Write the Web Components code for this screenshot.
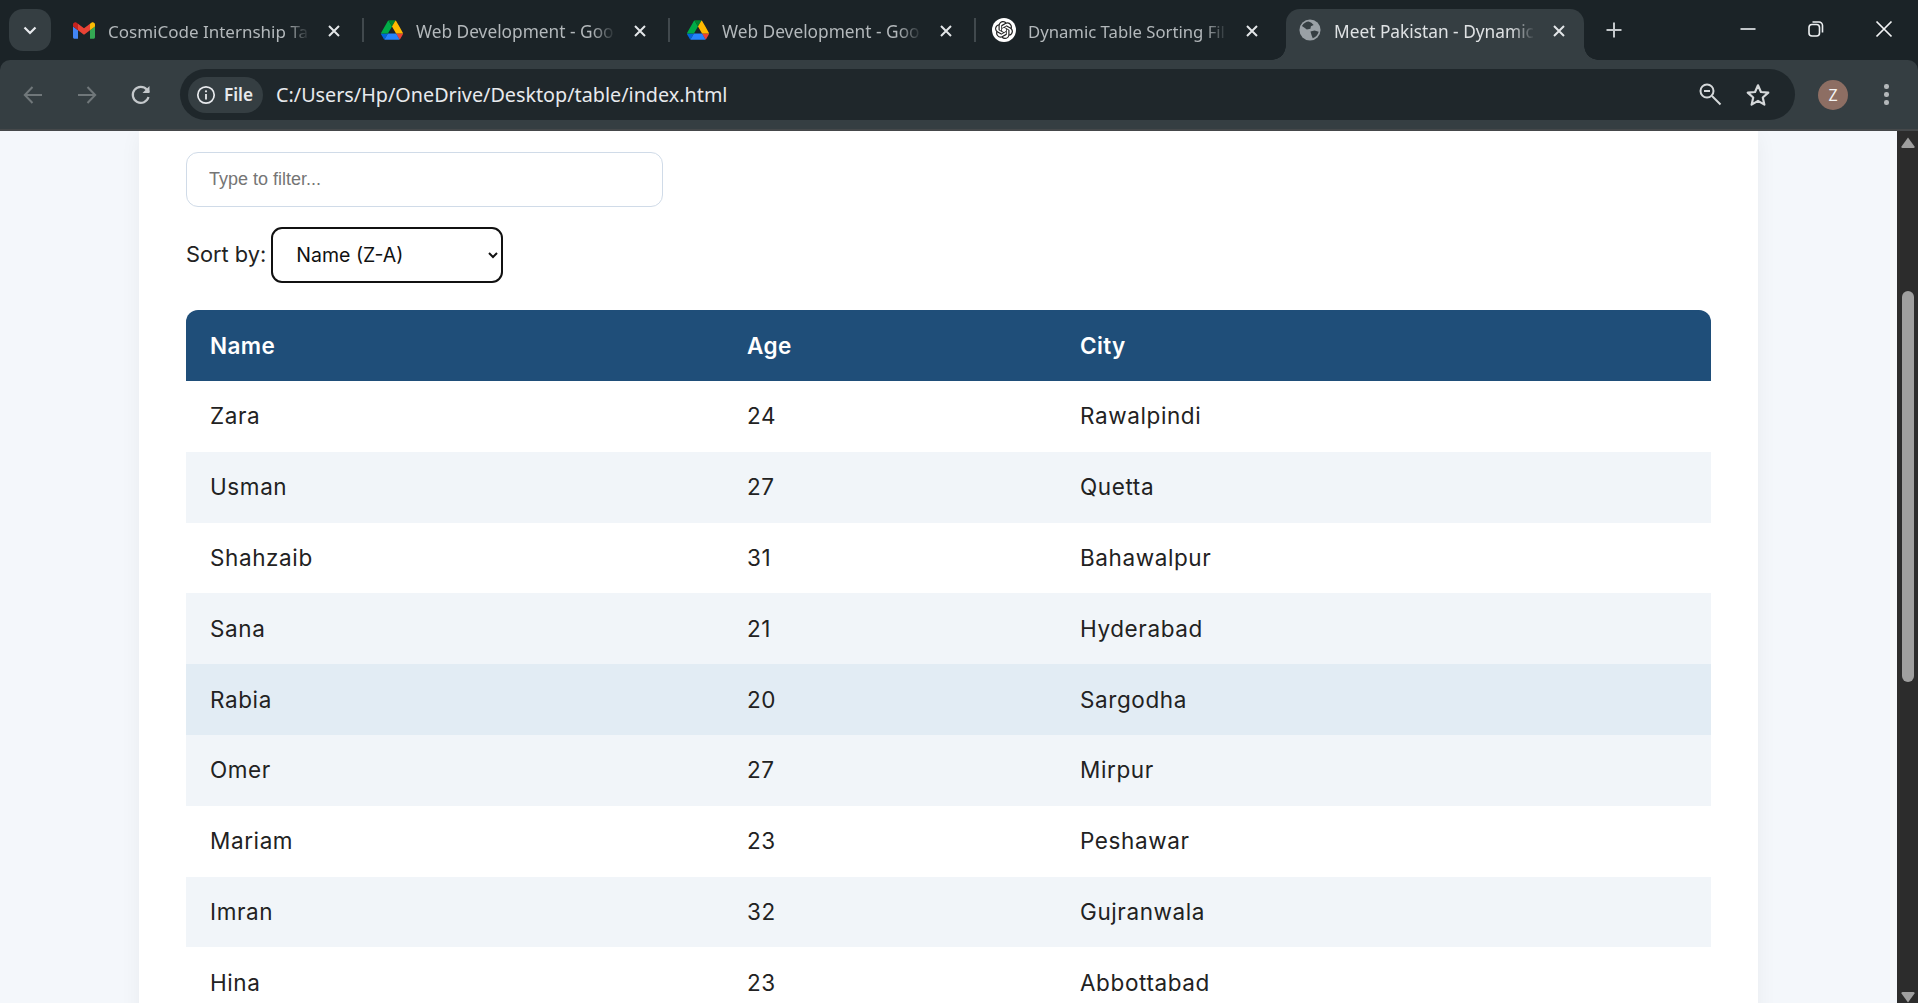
<!DOCTYPE html>
<html>
<head>
<meta charset="utf-8">
<title>Meet Pakistan - Dynamic Table</title>
<style>
    html, body { margin: 0; height: 100%; overflow: hidden; background: #1b2327; }
    body { display: flex; flex-direction: column; font-family: "Inter", "Liberation Sans", sans-serif; }
</style>
</head>
<body>
<browser-tabs>
    <browser-tab title-text="CosmiCode Internship Ta" icon="gmail" style="--tab-w:304px;--pad:12px;--title-size:17px"></browser-tab>
    <browser-tab title-text="Web Development - Goo" icon="drive" style="--tab-w:306px"></browser-tab>
    <browser-tab title-text="Web Development - Goo" icon="drive" style="--tab-w:306px"></browser-tab>
    <browser-tab title-text="Dynamic Table Sorting Fil" icon="chatgpt" style="--tab-w:306px;--title-size:16.7px"></browser-tab>
    <browser-tab title-text="Meet Pakistan - Dynamic" icon="globe" active style="--tab-w:298px;--pad:12px"></browser-tab>
</browser-tabs>
<browser-toolbar url="C:/Users/Hp/OneDrive/Desktop/table/index.html"></browser-toolbar>
<page-view>
    <table-card>
        <filter-controls></filter-controls>
        <data-table>
            <data-row name="Zara" age="24" city="Rawalpindi"></data-row>
            <data-row name="Usman" age="27" city="Quetta" striped></data-row>
            <data-row name="Shahzaib" age="31" city="Bahawalpur"></data-row>
            <data-row name="Sana" age="21" city="Hyderabad" striped></data-row>
            <data-row name="Rabia" age="20" city="Sargodha" hovered></data-row>
            <data-row name="Omer" age="27" city="Mirpur" striped></data-row>
            <data-row name="Mariam" age="23" city="Peshawar"></data-row>
            <data-row name="Imran" age="32" city="Gujranwala" striped></data-row>
            <data-row name="Hina" age="23" city="Abbottabad"></data-row>
        </data-table>
    </table-card>
</page-view>

<script>
const ICONS = {
    gmail: `<svg width="22" height="17" viewBox="52 42 88 66"><path fill="#4285f4" d="M58 108h14V74L52 59v43c0 3.32 2.69 6 6 6"/><path fill="#34a853" d="M120 108h14c3.32 0 6-2.69 6-6V59l-20 15"/><path fill="#fbbc04" d="M120 48v26l20-15v-8c0-7.42-8.47-11.65-14.4-7.2"/><path fill="#ea4335" d="M72 74V48l24 18 24-18v26L96 92"/><path fill="#c5221f" d="M52 51v8l20 15V48l-5.6-4.2c-5.94-4.45-14.4-.22-14.4 7.2"/></svg>`,
    drive: `<svg width="22" height="20" viewBox="0 0 87.3 78"><path d="m6.6 66.85 3.85 6.65c.8 1.4 1.95 2.5 3.3 3.3l13.75-23.8h-27.5c0 1.55.4 3.1 1.2 4.5z" fill="#0066da"/><path d="m43.65 25-13.75-23.8c-1.35.8-2.5 1.9-3.3 3.3l-25.4 44a9.06 9.06 0 0 0 -1.2 4.5h27.5z" fill="#00ac47"/><path d="m73.55 76.8c1.35-.8 2.5-1.9 3.3-3.3l1.6-2.75 7.65-13.25c.8-1.4 1.2-2.95 1.2-4.5h-27.502l5.852 11.5z" fill="#ea4335"/><path d="m43.65 25 13.75-23.8c-1.35-.8-2.9-1.2-4.5-1.2h-18.5c-1.6 0-3.15.45-4.5 1.2z" fill="#00832d"/><path d="m59.8 53h-32.3l-13.75 23.8c1.35.8 2.9 1.2 4.5 1.2h50.8c1.6 0 3.15-.45 4.5-1.2z" fill="#2684fc"/><path d="m73.4 26.5-12.7-22c-.8-1.4-1.95-2.5-3.3-3.3l-13.75 23.8 16.15 28h27.45c0-1.55-.4-3.1-1.2-4.5z" fill="#ffba00"/></svg>`,
    chatgpt: `<svg width="24" height="24" viewBox="-4 -4 32 32"><circle cx="12" cy="12" r="16" fill="#fff"/><path fill="#222" d="M22.2819 9.8211a5.9847 5.9847 0 0 0-.5157-4.9108 6.0462 6.0462 0 0 0-6.5098-2.9A6.0651 6.0651 0 0 0 4.9807 4.1818a5.9847 5.9847 0 0 0-3.9977 2.9 6.0462 6.0462 0 0 0 .7427 7.0966 5.98 5.98 0 0 0 .511 4.9107 6.051 6.051 0 0 0 6.5146 2.9001A5.9847 5.9847 0 0 0 13.2599 24a6.0557 6.0557 0 0 0 5.7718-4.2058 5.9894 5.9894 0 0 0 3.9977-2.9001 6.0557 6.0557 0 0 0-.7475-7.0729zm-9.022 12.6081a4.4755 4.4755 0 0 1-2.8764-1.0408l.1419-.0804 4.7783-2.7582a.7948.7948 0 0 0 .3927-.6813v-6.7369l2.02 1.1686a.071.071 0 0 1 .038.052v5.5826a4.504 4.504 0 0 1-4.4945 4.4944zm-9.6607-4.1254a4.4708 4.4708 0 0 1-.5346-3.0137l.142.0852 4.783 2.7582a.7712.7712 0 0 0 .7806 0l5.8428-3.3685v2.3324a.0804.0804 0 0 1-.0332.0615L9.74 19.9502a4.4992 4.4992 0 0 1-6.1408-1.6464zM2.3408 7.8956a4.485 4.485 0 0 1 2.3655-1.9728V11.6a.7664.7664 0 0 0 .3879.6765l5.8144 3.3543-2.0201 1.1685a.0757.0757 0 0 1-.071 0l-4.8303-2.7865A4.504 4.504 0 0 1 2.3408 7.872zm16.5963 3.8558L13.1038 8.364 15.1192 7.2a.0757.0757 0 0 1 .071 0l4.8303 2.7913a4.4944 4.4944 0 0 1-.6765 8.1042v-5.6772a.79.79 0 0 0-.407-.667zm2.0107-3.0231l-.142-.0852-4.7735-2.7818a.7759.7759 0 0 0-.7854 0L9.409 9.2297V6.8974a.0662.0662 0 0 1 .0284-.0615l4.8303-2.7866a4.4992 4.4992 0 0 1 6.6802 4.66zM8.3065 12.863l-2.02-1.1638a.0804.0804 0 0 1-.038-.0567V6.0742a4.4992 4.4992 0 0 1 7.3757-3.4537l-.142.0805L8.704 5.459a.7948.7948 0 0 0-.3927.6813zm1.0976-2.3654l2.602-1.4998 2.6069 1.4998v2.9994l-2.5974 1.4997-2.6067-1.4997Z"/></svg>`,
    globe: `<svg width="22" height="22" viewBox="0 0 24 24"><circle cx="12" cy="12" r="11.5" fill="#9aa1a6"/><path fill="#353e42" d="M3.2 7.5C5 4.5 8 3 10.5 2.8L13.5 4.2 16 6.5 13 8 12.5 10.5 8.5 11.5 6 9.5Z M12.5 13.5 17 12.5 21.5 14C20.5 17.5 18 20.3 15 21L13.8 18Z"/></svg>`
};

class BrowserTabs extends HTMLElement {
    constructor() {
        super();
        this.attachShadow({ mode: 'open' });
    }
    connectedCallback() {
        this.shadowRoot.innerHTML = `
        <style>
            :host { display: flex; align-items: flex-start; height: 60px; background: #1b2327; color: #fff; flex: none; }
            .list-btn { width: 42px; height: 42px; margin: 9px 0 0 9px; border-radius: 14px; background: #353e42; display: flex; align-items: center; justify-content: center; flex: none; }
            .tabs { display: flex; margin-left: 9px; align-items: flex-start; }
            .plus { margin: 0 0 0 21px; height: 60px; padding-top: 21px; box-sizing: border-box; flex: none; }
            .spacer { flex: 1; }
            .win { display: flex; flex: none; }
            .win div { width: 68px; height: 58px; display: flex; align-items: center; justify-content: center; }
        </style>
        <div class="list-btn"><svg width="14" height="9" viewBox="0 0 14 9"><path d="M1.5 1.5 7 7l5.5-5.5" fill="none" stroke="#e8eaed" stroke-width="2.2"/></svg></div>
        <div class="tabs"><slot></slot></div>
        <div class="plus"><svg width="18" height="18" viewBox="0 0 18 18"><path d="M9 1.5v15M1.5 9h15" stroke="#c4c8cb" stroke-width="2"/></svg></div>
        <div class="spacer"></div>
        <div class="win">
            <div><svg width="16" height="16" viewBox="0 0 16 16"><path d="M0.5 8h15" stroke="#eceff1" stroke-width="1.6"/></svg></div>
            <div><svg width="16" height="16" viewBox="0 0 16 16"><rect x="1" y="3.5" width="10.5" height="11.5" rx="3" fill="none" stroke="#eceff1" stroke-width="1.6"/><path d="M4.5 1h6.5a3.5 3.5 0 0 1 3.5 3.5v7" fill="none" stroke="#eceff1" stroke-width="1.6"/></svg></div>
            <div><svg width="18" height="18" viewBox="0 0 18 18"><path d="M1.5 1.5l15 15M16.5 1.5l-15 15" stroke="#f2f4f5" stroke-width="1.7"/></svg></div>
        </div>`;
    }
}
customElements.define('browser-tabs', BrowserTabs);

class BrowserTab extends HTMLElement {
    constructor() {
        super();
        this.attachShadow({ mode: 'open' });
    }
    connectedCallback() {
        const active = this.hasAttribute('active');
        const beforeActive = this.nextElementSibling && this.nextElementSibling.hasAttribute('active');
        this.shadowRoot.innerHTML = `
        <style>
            :host { display: block; flex: none; position: relative; width: var(--tab-w); height: 51px; margin-top: 9px; box-sizing: border-box; }
            :host([active]) { background: #353e42; border-radius: 14px 14px 0 0; margin-left: 4px; }
            :host([active])::before, :host([active])::after { content: ""; position: absolute; bottom: 0; width: 14px; height: 14px; }
            :host([active])::before { left: -14px; background: radial-gradient(circle at 0 0, transparent 13.5px, #353e42 14px); }
            :host([active])::after { right: -14px; background: radial-gradient(circle at 100% 0, transparent 13.5px, #353e42 14px); }
            .inner { display: flex; align-items: center; height: 44px; padding: 0 ${active ? '17px' : '22px'} 0 var(--pad, 16px); box-sizing: border-box; position: relative; }
            .sep { position: absolute; right: 0; top: 9px; width: 2px; height: 24px; background: #41494d; }
            .icon { width: 24px; height: 24px; margin-top: -2px; display: flex; align-items: center; justify-content: center; flex: none; margin-right: 12px; }
            .title {
                flex: 1; min-width: 0; overflow: hidden; white-space: nowrap;
                font: 400 var(--title-size, 17.3px) "Noto Sans", "Open Sans", sans-serif;
                color: ${active ? '#dfe2e4' : '#b3b8bb'};
                -webkit-mask-image: linear-gradient(to right, #000 calc(100% - 30px), transparent calc(100% - 6px));
                mask-image: linear-gradient(to right, #000 calc(100% - 30px), transparent calc(100% - 6px));
            }
            .close { flex: none; margin-left: 10px; width: 16px; height: 16px; display: flex; margin-top: -1px; }
        </style>
        <div class="inner">
            <span class="icon">${ICONS[this.getAttribute('icon')]}</span>
            <span class="title">${this.getAttribute('title-text')}</span>
            <span class="close"><svg width="16" height="16" viewBox="0 0 16 16"><path d="M3 3l10 10M13 3L3 13" stroke="#e3e6e8" stroke-width="2"/></svg></span>
            ${active || beforeActive ? '' : '<span class="sep"></span>'}
        </div>`;
    }
}
customElements.define('browser-tab', BrowserTab);

class BrowserToolbar extends HTMLElement {
    constructor() {
        super();
        this.attachShadow({ mode: 'open' });
    }
    connectedCallback() {
        this.shadowRoot.innerHTML = `
        <style>
            :host { display: flex; align-items: center; flex: none; height: 71px; box-sizing: border-box; background: #353e42; border-radius: 10px 10px 0 0; border-bottom: 2px solid #45484a; position: relative; }
            .nav { display: flex; flex: none; width: 180px; padding-left: 21px; box-sizing: border-box; gap: 30px; }
            .nav svg { flex: none; }
            .omnibox { flex: 1; height: 51px; background: #1f272b; border-radius: 26px; display: flex; align-items: center; padding: 0 8px; box-sizing: border-box; }
            .chip { display: flex; align-items: center; height: 36px; width: 75px; border-radius: 18px; background: #353e42; flex: none; padding-left: 8px; box-sizing: border-box; gap: 8px; color: #e8eaed; font: 600 17.2px "Noto Sans", sans-serif; }
            .url { flex: 1; margin-left: 13px; color: #e8eaed; font: 400 19.77px "Noto Sans", sans-serif; white-space: nowrap; }
            .actions { display: flex; align-items: center; gap: 22px; padding-right: 16px; flex: none; }
            .end { display: flex; align-items: center; flex: none; width: 123px; padding-left: 23px; box-sizing: border-box; }
            .avatar { width: 30px; height: 30px; border-radius: 50%; background: #8d6e63; color: #f5f5f5; font: 400 16px "Noto Sans", sans-serif; display: flex; align-items: center; justify-content: center; flex: none; }
            .menu { margin-left: 36px; width: 5px; display: flex; flex-direction: column; gap: 3.5px; }
            .menu i { display: block; width: 4.5px; height: 4.5px; border-radius: 50%; background: #b4b8ba; }
        </style>
        <div class="nav">
            <svg width="24" height="24" viewBox="0 0 24 24"><path d="M21 12H4M11.5 4 3.8 12l7.7 8" fill="none" stroke="#70777a" stroke-width="2"/></svg>
            <svg width="24" height="24" viewBox="0 0 24 24"><path d="M3 12h17M12.5 4l7.7 8-7.7 8" fill="none" stroke="#70777a" stroke-width="2"/></svg>
            <svg width="24" height="24" viewBox="0 0 24 24"><path d="M19.5 14a8 8 0 1 1-1.6-7.3L20 9" fill="none" stroke="#c4c8cb" stroke-width="2.2"/><path d="M20.5 3v7h-7z" fill="#c4c8cb"/></svg>
        </div>
        <div class="omnibox">
            <div class="chip"><svg width="20" height="20" viewBox="0 0 20 20"><circle cx="10" cy="10" r="8.2" fill="none" stroke="#e8eaed" stroke-width="1.7"/><path d="M10 9v5.5" stroke="#e8eaed" stroke-width="1.8"/><circle cx="10" cy="6.3" r="1.1" fill="#e8eaed"/></svg><span>File</span></div>
            <span class="url">${this.getAttribute('url')}</span>
            <div class="actions">
                <svg width="24" height="24" viewBox="0 0 24 24"><circle cx="8" cy="8" r="6.5" fill="none" stroke="#d5d8da" stroke-width="2"/><path d="M5 8h6" stroke="#d5d8da" stroke-width="2"/><path d="m13 13 8.5 8.5" stroke="#d5d8da" stroke-width="2"/></svg>
                <svg width="26" height="26" viewBox="0 0 24 24"><path d="m12 3 2.7 6.2 6.8.6-5.1 4.5 1.5 6.6L12 17.4l-5.9 3.5 1.5-6.6-5.1-4.5 6.8-.6z" fill="none" stroke="#d5d8da" stroke-width="2" stroke-linejoin="round"/></svg>
            </div>
        </div>
        <div class="end">
            <div class="avatar">Z</div>
            <div class="menu"><i></i><i></i><i></i></div>
        </div>`;
    }
}
customElements.define('browser-toolbar', BrowserToolbar);

class PageView extends HTMLElement {
    constructor() {
        super();
        this.attachShadow({ mode: 'open' });
    }
    connectedCallback() {
        this.shadowRoot.innerHTML = `
        <style>
            :host { display: flex; flex: 1; min-height: 0; overflow: hidden; background: #f4f7fb; }
            .content { flex: 1; min-width: 0; padding: 0 139px; box-sizing: border-box; }
            .scrollbar { width: 21px; flex: none; background: #2c2c2c; display: flex; flex-direction: column; align-items: center; }
            .up { margin-top: 6px; width: 14px; height: 11px; flex: none; }
            .thumb { width: 12px; height: 391px; margin-top: 143px; border-radius: 6px; background: #9f9f9f; flex: none; }
            .gap { flex: 1; }
            .down { width: 14px; height: 11px; flex: none; }
        </style>
        <div class="content"><slot></slot></div>
        <div class="scrollbar">
            <svg class="up" viewBox="0 0 14 11"><path d="M7 .5 13.5 9.5Q14 11 12.5 11h-11Q0 11 .5 9.5z" fill="#9f9f9f"/></svg>
            <div class="thumb"></div>
            <div class="gap"></div>
            <svg class="down" viewBox="0 0 14 11"><path d="M7 10.5.5 1.5Q0 0 1.5 0h11Q14 0 13.5 1.5z" fill="#9f9f9f"/></svg>
        </div>`;
    }
}
customElements.define('page-view', PageView);

class TableCard extends HTMLElement {
    constructor() {
        super();
        this.attachShadow({ mode: 'open' });
    }
    connectedCallback() {
        this.shadowRoot.innerHTML = `
        <style>
            :host { display: block; background: #fff; padding: 21px 47px 0; box-shadow: 0 4px 20px rgba(0, 0, 0, 0.05); min-height: 100%; box-sizing: border-box; }
        </style>
        <slot></slot>`;
    }
}
customElements.define('table-card', TableCard);

class FilterControls extends HTMLElement {
    constructor() {
        super();
        this.attachShadow({ mode: 'open' });
    }
    connectedCallback() {
        this.shadowRoot.innerHTML = `
        <style>
            :host { display: block; margin-bottom: 27px; }
            input { display: block; width: 477px; height: 55px; box-sizing: border-box; padding: 0 22px; border: 1px solid #d0dbe8; border-radius: 12px; background: #fff; font: 400 18px "Liberation Sans", sans-serif; outline: none; }
            input::placeholder { color: #757575; }
            .sort { display: flex; align-items: center; margin-top: 20px; gap: 5px; }
            label { font: 400 21.8px "Inter", sans-serif; color: #222; padding-bottom: 2px; }
            select { width: 232px; height: 56px; box-sizing: border-box; padding: 0 19px; border: 2.5px solid #111; border-radius: 11px; background: #fff; color: #111; font: 400 19.5px "Inter", sans-serif; outline: none; }
        </style>
        <input type="text" placeholder="Type to filter...">
        <div class="sort">
            <label>Sort by:</label>
            <select>
                <option>Name (Z-A)</option>
                <option>Name (A-Z)</option>
                <option>Age (Low-High)</option>
                <option>Age (High-Low)</option>
            </select>
        </div>`;
    }
}
customElements.define('filter-controls', FilterControls);

class DataTable extends HTMLElement {
    constructor() {
        super();
        this.attachShadow({ mode: 'open' });
    }
    connectedCallback() {
        this.shadowRoot.innerHTML = `
        <style>
            :host { display: block; }
            .head { display: grid; grid-template-columns: 537px 333px 1fr; height: 71px; align-items: center; background: #1f4e79; color: #fff; border-radius: 12px 12px 0 0; font: 600 22.5px "Inter", sans-serif; letter-spacing: 0.4px; }
            .head span { padding: 0 0 1px 24px; }
        </style>
        <div class="head"><span>Name</span><span>Age</span><span>City</span></div>
        <slot></slot>`;
    }
}
customElements.define('data-table', DataTable);

class DataRow extends HTMLElement {
    constructor() {
        super();
        this.attachShadow({ mode: 'open' });
    }
    connectedCallback() {
        this.shadowRoot.innerHTML = `
        <style>
            :host { display: grid; grid-template-columns: 537px 333px 1fr; height: 70.8px; align-items: center; background: #fff; color: #222; font: 400 22.5px "Inter", sans-serif; letter-spacing: 0.6px; }
            :host([striped]) { background: #f1f5f9; }
            :host([hovered]) { background: #e2ecf4; }
            span { padding: 0 0 1px 24px; }
        </style>
        <span>${this.getAttribute('name')}</span><span>${this.getAttribute('age')}</span><span>${this.getAttribute('city')}</span>`;
    }
}
customElements.define('data-row', DataRow);
</script>
</body>
</html>
